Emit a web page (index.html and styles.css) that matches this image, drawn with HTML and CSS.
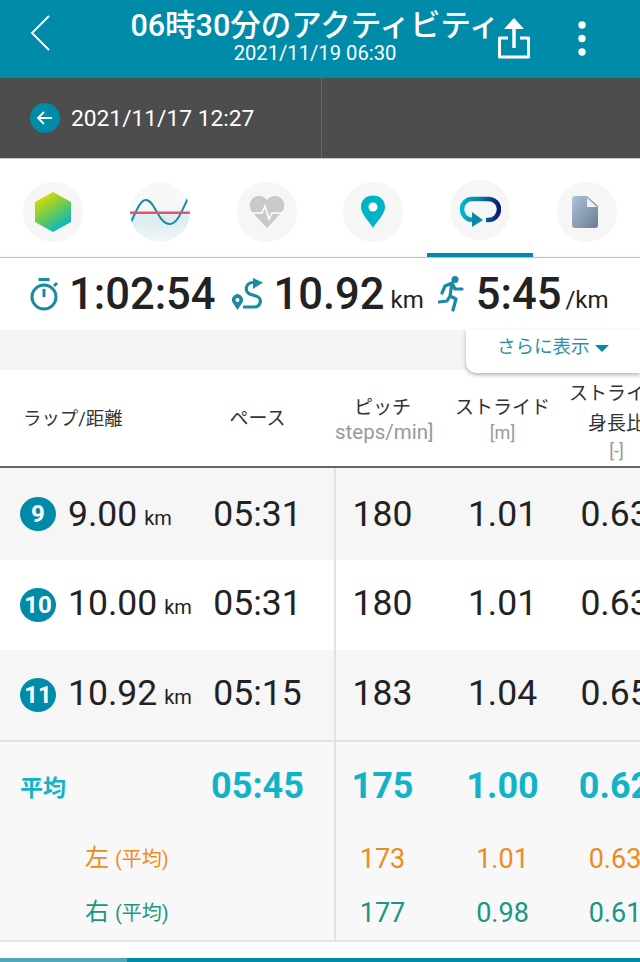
FILE: index.html
```html
<!DOCTYPE html>
<html lang="ja">
<head>
    <meta charset="UTF-8">
    <meta name="viewport" content="width=device-width, initial-scale=1.0">
    <title>アクティビティ</title>
    <link rel="stylesheet" href="styles.css">
</head>
<body>

<div id="page">
    <header class="appbar">
        <div class="appbar-left">
            <svg class="back-icon" width="24" height="36" viewBox="0 0 24 36"><path d="M19 1 L2 18 L19 35" fill="none" stroke="#fff" stroke-width="1.8"/></svg>
        </div>
        <div class="appbar-title">
            <div class="title">06時30分のアクティビティ</div>
            <div class="subtitle">2021/11/19 06:30</div>
        </div>
        <div class="appbar-right">
            <svg width="34" height="42" viewBox="0 0 34 42"><path d="M11 21 H2.5 V40 H31.5 V21 H23" fill="none" stroke="#fff" stroke-width="3" stroke-linejoin="round"/><path d="M17 31 V8" stroke="#fff" stroke-width="3.5"/><path d="M7 12 L17 1 L27 12 Z" fill="#fff"/></svg>
            <svg class="dots" width="12" height="38" viewBox="0 0 12 38"><circle cx="6" cy="5" r="3.7" fill="#fff"/><circle cx="6" cy="18.5" r="3.7" fill="#fff"/><circle cx="6" cy="32" r="3.7" fill="#fff"/></svg>
        </div>
    </header>

    <div class="prev-bar">
        <div class="prev-link">
            <svg width="30" height="30" viewBox="0 0 30 30"><circle cx="15" cy="15" r="15" fill="#008ca8"/><path d="M22 15 H8 M14 9 L8 15 L14 21" fill="none" stroke="#fff" stroke-width="1.8"/></svg>
            <span>2021/11/17 12:27</span>
        </div>
        <div class="next-link"></div>
    </div>

    <nav class="tabs">
        <div class="tab">
            <div class="tab-circle">
                <svg width="40" height="42" viewBox="0 0 40 42"><defs><linearGradient id="hexGrad" x1="0.2" y1="0.05" x2="0.75" y2="0.95"><stop offset="0" stop-color="#e2dc00"/><stop offset="0.5" stop-color="#6ccb50"/><stop offset="1" stop-color="#00b4d2"/></linearGradient></defs><polygon points="20,1 38,11 38,31 20,41 2,31 2,11" fill="url(#hexGrad)"/></svg>
            </div>
        </div>
        <div class="tab">
            <div class="tab-circle tab-circle-wave">
                <svg width="60" height="60" viewBox="0 0 60 60"><path d="M1 40 C6 30 10 18 16 18 C25 18 28 42 40 42 C47 42 52 29 58 16" fill="none" stroke="#1d8aa3" stroke-width="2"/><rect x="0" y="29.5" width="60" height="2.5" fill="#e0566f"/></svg>
            </div>
        </div>
        <div class="tab">
            <div class="tab-circle">
                <svg width="36" height="34" viewBox="0 0 36 34"><path d="M18 33 L3 17 C-2 10 2 1 10 1 C13 1 16 3 18 5 C20 3 23 1 26 1 C34 1 38 10 33 17 Z" fill="#c9c9c9"/><path d="M1 18 H13 L16 11 L20 24 L23 18 H35" fill="none" stroke="#fff" stroke-width="1.6"/></svg>
            </div>
        </div>
        <div class="tab">
            <div class="tab-circle">
                <svg width="26" height="34" viewBox="0 0 26 34"><path d="M13 33 C8 25 1 19 1 12 C1 5 6 0.5 13 0.5 C20 0.5 25 5 25 12 C25 19 18 25 13 33 Z" fill="#00b4c8"/><circle cx="13" cy="12" r="4.5" fill="#fff"/></svg>
            </div>
        </div>
        <div class="tab tab-active">
            <div class="tab-circle">
                <svg width="42" height="36" viewBox="0 0 42 36"><defs><linearGradient id="loopGrad" x1="0" y1="0" x2="1" y2="0"><stop offset="0" stop-color="#00b4cc"/><stop offset="0.5" stop-color="#0a7fa8"/><stop offset="1" stop-color="#0a1a70"/></linearGradient></defs><path d="M13 28 C6 27 3 22 3 17 C3 11 8 7 13 7 H29 C36 7 40 12 40 17 C40 23 36 28 29 28 H27" fill="none" stroke="url(#loopGrad)" stroke-width="4.5"/><path d="M13 20 L24 28 L13 35 Z" fill="#0a8aa8"/></svg>
            </div>
        </div>
        <div class="tab">
            <div class="tab-circle">
                <svg class="doc-icon" width="26" height="32" viewBox="0 0 26 32"><defs><linearGradient id="docGrad" x1="0" y1="0" x2="1" y2="1"><stop offset="0" stop-color="#aec2de"/><stop offset="1" stop-color="#6b7c8c"/></linearGradient></defs><path d="M3 0 H15 L26 10 V29 Q26 32 23 32 H3 Q0 32 0 29 V3 Q0 0 3 0 Z" fill="url(#docGrad)"/><path d="M15 2 L25 11 H15 Z" fill="#eef2f7"/></svg>
            </div>
        </div>
    </nav>

    <section class="summary">
        <svg width="32" height="34" viewBox="0 0 32 34"><circle cx="15" cy="20" r="12" fill="none" stroke="#1a8aa3" stroke-width="3"/><rect x="9.5" y="1" width="11" height="3" fill="#1a8aa3"/><path d="M15 12 V20" stroke="#1a8aa3" stroke-width="3"/><path d="M25 9 L28 6" stroke="#1a8aa3" stroke-width="3"/></svg>
        <span class="summary-num summary-time">1:02:54</span>
        <svg class="summary-route" width="32" height="33" viewBox="0 0 32 33"><path d="M5.5 32 L1 25 A5.5 5.5 0 1 1 10 25 Z" fill="#1a8aa3"/><circle cx="5.5" cy="22" r="2" fill="#fff"/><path d="M11 29 H22 C29 29 31 20 24 18 L19 16.5 C12 14.5 13 4.5 21 4.5 H23" fill="none" stroke="#1a8aa3" stroke-width="3.2"/><path d="M21 0 L31 4.5 L21 11 Z" fill="#1a8aa3"/></svg>
        <span class="summary-num">10.92</span>
        <span class="summary-unit summary-km">km</span>
        <svg class="summary-run" width="26" height="37" viewBox="0 0 26 37"><circle cx="17" cy="3.5" r="3.5" fill="#1a8aa3"/><path d="M24 13 H17 L14 7 L7 10 L4 17 M14 7 L12 20 L18 23 L15 34 M12 20 L9 25 L1 26" fill="none" stroke="#1a8aa3" stroke-width="3.2" stroke-linecap="round" stroke-linejoin="round"/></svg>
        <span class="summary-num">5:45</span>
        <span class="summary-unit">/km</span>
    </section>

    <div class="more-band">
        <div class="more-tab">さらに表示<span class="more-arrow"></span></div>
    </div>

    <section class="laps">
        <div class="row row-head">
            <div class="cell cell-first">ラップ/距離</div>
            <div class="cell">ペース</div>
            <div class="cell cell-two">ピッチ<span class="unit unit-steps">steps/min]</span></div>
            <div class="cell cell-two">ストライド<span class="unit">[m]</span></div>
            <div class="cell cell-ratio">ストライド<br>身長比<span class="unit">[-]</span></div>
        </div>

        <div class="rows-body">
            <div class="row row-lap row-gray">
                <div class="cell cell-first"><span class="lap-no">9</span><span class="lap-dist">9.00</span><span class="lap-km">km</span></div>
                <div class="cell">05:31</div>
                <div class="cell">180</div>
                <div class="cell">1.01</div>
                <div class="cell">0.63</div>
            </div>
            <div class="row row-lap">
                <div class="cell cell-first"><span class="lap-no">10</span><span class="lap-dist">10.00</span><span class="lap-km">km</span></div>
                <div class="cell">05:31</div>
                <div class="cell">180</div>
                <div class="cell">1.01</div>
                <div class="cell">0.63</div>
            </div>
            <div class="row row-lap row-gray">
                <div class="cell cell-first"><span class="lap-no">11</span><span class="lap-dist">10.92</span><span class="lap-km">km</span></div>
                <div class="cell">05:15</div>
                <div class="cell">183</div>
                <div class="cell">1.04</div>
                <div class="cell">0.65</div>
            </div>

            <div class="totals">
                <div class="row row-avg">
                    <div class="cell cell-first avg-label">平均</div>
                    <div class="cell">05:45</div>
                    <div class="cell">175</div>
                    <div class="cell">1.00</div>
                    <div class="cell">0.62</div>
                </div>
                <div class="row row-side side-left">
                    <div class="cell cell-side">左 <small>(平均)</small></div>
                    <div class="cell"></div>
                    <div class="cell">173</div>
                    <div class="cell">1.01</div>
                    <div class="cell">0.63</div>
                </div>
                <div class="row row-side side-right">
                    <div class="cell cell-side">右 <small>(平均)</small></div>
                    <div class="cell"></div>
                    <div class="cell">177</div>
                    <div class="cell">0.98</div>
                    <div class="cell">0.61</div>
                </div>
            </div>
        </div>
    </section>

    <div class="progress"><div class="progress-done"></div></div>
</div>

</body>
</html>
```

FILE: styles.css
```css
body {
    margin: 0;
    font-family: Roboto, "Noto Sans CJK JP", sans-serif;
    color: #222;
    background-color: #fff;
}
#page {
    width: 640px;
    height: 962px;
    overflow: hidden;
    display: flex;
    flex-direction: column;
}

/* top bar */
.appbar {
    height: 78px;
    flex: none;
    background-color: #008ca8;
    display: grid;
    grid-template-columns: 1fr auto 1fr;
    color: #fff;
}
.appbar-left {
    padding: 15px 0 0 30px;
}
.back-icon {
    display: block;
}
.appbar-title {
    text-align: center;
    margin-left: -5px;
    margin-right: 5px;
}
.title {
    font-size: 30.5px;
    font-weight: 500;
    line-height: 34px;
    margin-top: 9px;
    white-space: nowrap;
}
.subtitle {
    font-size: 20.2px;
    line-height: 21px;
}
.appbar-right {
    display: flex;
    align-items: flex-start;
    padding-top: 17px;
    margin-left: -8px;
    white-space: nowrap;
}
.dots {
    margin-left: 45px;
    margin-top: 3px;
}

/* previous activity bar */
.prev-bar {
    height: 80px;
    flex: none;
    background-color: #4d4d4d;
    display: flex;
    border-bottom: 1px solid #ccc;
}
.prev-link {
    width: 322px;
    border-right: 1px solid #666;
    display: flex;
    align-items: center;
    gap: 11px;
    padding-left: 30px;
    box-sizing: border-box;
    color: #fff;
    font-size: 22.75px;
}
.next-link {
    flex: 1;
}

/* tab icons */
.tabs {
    height: 98px;
    flex: none;
    display: flex;
    border-bottom: 1px solid #c8c8c8;
}
.tab {
    flex: 1;
    display: flex;
    justify-content: center;
    padding-top: 23px;
    box-sizing: border-box;
}
.tab-active {
    padding-top: 21px;
    border-bottom: 4px solid #008ca8;
}
.tab-circle {
    width: 60px;
    height: 60px;
    border-radius: 50%;
    background-color: #f6f6f6;
    display: flex;
    align-items: center;
    justify-content: center;
    overflow: hidden;
}
.tab-circle-wave {
    background: linear-gradient(#f8f8f8 45%, #dcebf0 60%, #f2f6f8 100%);
}
.doc-icon {
    margin-right: 3px;
}

/* time, distance and pace */
.summary {
    height: 72px;
    flex: none;
    box-sizing: border-box;
    display: flex;
    align-items: center;
    padding-left: 29px;
    background-color: #fff;
    box-shadow: 0 2px 5px rgba(0, 0, 0, 0.3);
    position: relative;
    z-index: 1;
}
.summary-num {
    font-size: 43.5px;
    font-weight: 500;
    margin-left: 8px;
}
.summary-time {
    margin-right: 16px;
}
.summary-route {
    margin-right: 2px;
}
.summary-unit {
    font-size: 24px;
    margin: 12px 0 0 4px;
}
.summary-km {
    margin-left: 6px;
}
.summary-run {
    margin-left: 14px;
    margin-right: 4px;
}

/* more button */
.more-band {
    height: 40px;
    flex: none;
    background-color: #f5f5f5;
    display: flex;
    justify-content: flex-end;
    position: relative;
    z-index: 2;
}
.more-tab {
    width: 174px;
    height: 43px;
    box-sizing: border-box;
    background-color: #fff;
    border-bottom-left-radius: 10px;
    box-shadow: 0 2px 4px rgba(0, 0, 0, 0.3);
    color: #2b93a8;
    font-size: 18.5px;
    line-height: 34px;
    padding-left: 31px;
}
.more-arrow {
    display: inline-block;
    margin-left: 5px;
    vertical-align: middle;
    border-left: 7px solid transparent;
    border-right: 7px solid transparent;
    border-top: 7px solid #008ca8;
}

/* lap table */
.laps {
    flex: none;
}
.row {
    display: grid;
    grid-template-columns: 180px 155px 95px 145px 80px;
    width: 655px;
    align-items: center;
    text-align: center;
}
.row-head {
    height: 98px;
    box-sizing: border-box;
    border-bottom: 2px solid #666;
    font-size: 19px;
    line-height: 25px;
    color: #333;
}
.row-head .cell-first {
    font-size: 18.4px;
}
.cell {
    white-space: nowrap;
}
.cell-first {
    text-align: left;
    padding-left: 23px;
}
.cell-two {
    margin-top: 4px;
}
.unit {
    display: block;
    color: #999;
    font-size: 18px;
}
.unit-steps {
    font-size: 20.5px;
    padding-right: 2px;
}
.cell-ratio {
    line-height: 30px;
    margin: 6px -10px 0;
    padding-left: 3px;
}
.cell-ratio .unit {
    line-height: 24px;
}
.row-lap {
    height: 90px;
    font-size: 35.5px;
    color: #222;
}
.row-lap:first-child {
    height: 92px;
}
.row-lap .cell {
    height: 100%;
    display: flex;
    align-items: center;
    justify-content: center;
    box-sizing: border-box;
}
/* second and third rows sit slightly above centre */
.row-lap + .row-lap .cell {
    padding-bottom: 4px;
}
.row-lap + .row-lap .lap-no {
    margin-top: 4px;
}
.row-gray {
    background-color: #f6f6f6;
}
.row-lap .cell:nth-child(3) {
    box-shadow: -1px 0 0 #e2e2e2, inset 1px 0 0 #e2e2e2;
}
.row-lap .cell-first {
    justify-content: flex-start;
    padding-left: 20px;
}
.lap-no {
    width: 36px;
    height: 34px;
    border-radius: 50%;
    background-color: #008ca8;
    color: #fff;
    font-size: 24px;
    font-weight: 700;
    line-height: 34px;
    text-align: center;
    flex: none;
    margin-right: 12px;
}
.lap-km {
    font-size: 20px;
    margin: 8px 0 0 7px;
}
.totals {
    border-top: 2px solid #e2e2e2;
    border-bottom: 2px solid #e2e2e2;
    background: linear-gradient(#e2e2e2, #e2e2e2) 334px 0 / 2px 100% no-repeat #f8f8f8;
    height: 202px;
    box-sizing: border-box;
}
.row-avg {
    height: 90px;
    box-sizing: border-box;
    padding-bottom: 2px;
    font-size: 36px;
    font-weight: 700;
    color: #12b3c8;
}
.avg-label {
    font-size: 23px;
    padding-left: 20px;
}
.row-side {
    height: 54px;
    font-size: 27px;
}
.cell-side {
    font-size: 24px;
    padding-left: 85px;
    text-align: left;
    margin-bottom: 7px;
}
.cell-side small {
    font-size: 20px;
}
.side-left {
    color: #ec8c1f;
}
.side-right {
    color: #1b9682;
}

/* bottom progress strip */
.progress {
    margin-top: auto;
    height: 4px;
    flex: none;
    background-color: #008ca8;
}
.progress-done {
    width: 127px;
    height: 4px;
    background-color: #4fa9b9;
}
```
